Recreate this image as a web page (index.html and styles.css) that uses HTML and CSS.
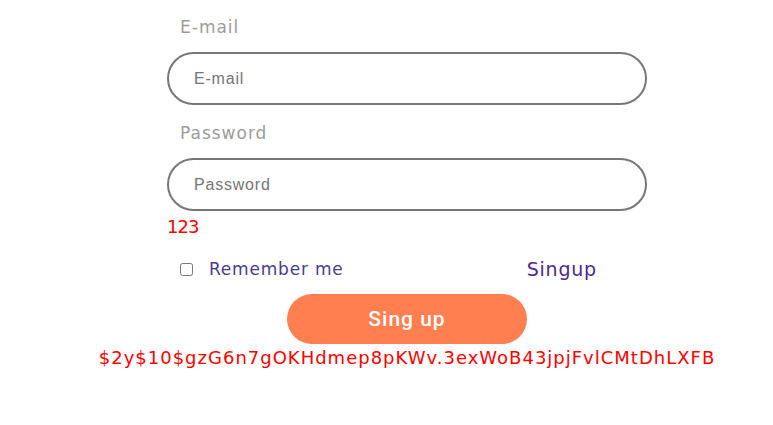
FILE: index.html
```html
<!DOCTYPE html>
<html lang="en">
<head>
<meta charset="utf-8">
<title>Sign up</title>
<link rel="stylesheet" href="styles.css">
</head>
<body>
<div class="page">
  <form class="form">
    <label class="label" for="email">E-mail</label>
    <input class="field" id="email" type="text" placeholder="E-mail">
    <label class="label" for="pw">Password</label>
    <input class="field" id="pw" type="password" placeholder="Password">
    <div class="error">123</div>
    <div class="row">
      <label class="remember"><input type="checkbox" class="check"><span>Remember me</span></label>
      <a class="singup-link">Singup</a>
    </div>
    <div class="btn-wrap"><button type="button" class="btn">Sing up</button></div>
  </form>
  <div class="hash">$2y$10$gzG6n7gOKHdmep8pKWv.3exWoB43jpjFvlCMtDhLXFB</div>
</div>
</body>
</html>
```
FILE: styles.css
```css
html, body {
  margin: 0;
  padding: 0;
  background: #ffffff;
}
body {
  font-family: "DejaVu Sans", "Open Sans", sans-serif;
}
.page {
  width: 618px;
  margin-left: 98px;
  display: flex;
  flex-direction: column;
  align-items: center;
  padding-top: 15px;
}
.form {
  width: 480px;
  display: flex;
  flex-direction: column;
}
.label {
  display: block;
  margin-left: 13px;
  font-size: 17px;
  line-height: 24px;
  letter-spacing: 1px;
  color: #9c9c9c;
  margin-bottom: 13px;
}
.field {
  box-sizing: border-box;
  width: 480px;
  height: 53px;
  border: 2px solid #777777;
  border-radius: 27px;
  padding: 0 25px;
  font-family: "Liberation Sans", Arial, sans-serif;
  font-size: 16px;
  letter-spacing: 0.8px;
  color: #333;
  outline: none;
  margin: 0 0 16px 0;
}
.field::placeholder {
  color: #757575;
}
.field + .error {
  margin-top: -14px;
}
.error {
  color: #ff0000;
  font-size: 18px;
  line-height: 27px;
  letter-spacing: -1px;
}
.row {
  display: flex;
  align-items: center;
  height: 26px;
  margin-top: 16px;
}
.remember {
  display: flex;
  align-items: center;
  margin-left: 13px;
  color: #4b3c8c;
  font-size: 17px;
  letter-spacing: 0.8px;
}
.check {
  margin: 0 16px 0 0;
  width: 13px;
  height: 13px;
}
.singup-link {
  margin-left: auto;
  margin-right: 50px;
  color: #4c2a8c;
  font-size: 19px;
  letter-spacing: 0.8px;
  cursor: pointer;
}
.btn-wrap {
  display: flex;
  justify-content: center;
  margin-top: 12px;
}
.btn {
  width: 240px;
  height: 50px;
  border: none;
  border-radius: 25px;
  background: #ff7f50;
  color: #ffffff;
  font-family: Roboto, "Liberation Sans", sans-serif;
  font-weight: 500;
  font-size: 21px;
  letter-spacing: 1px;
  cursor: pointer;
}
.hash {
  color: #ff0000;
  font-size: 18px;
  line-height: 27px;
  letter-spacing: 1px;
  white-space: nowrap;
}
```
